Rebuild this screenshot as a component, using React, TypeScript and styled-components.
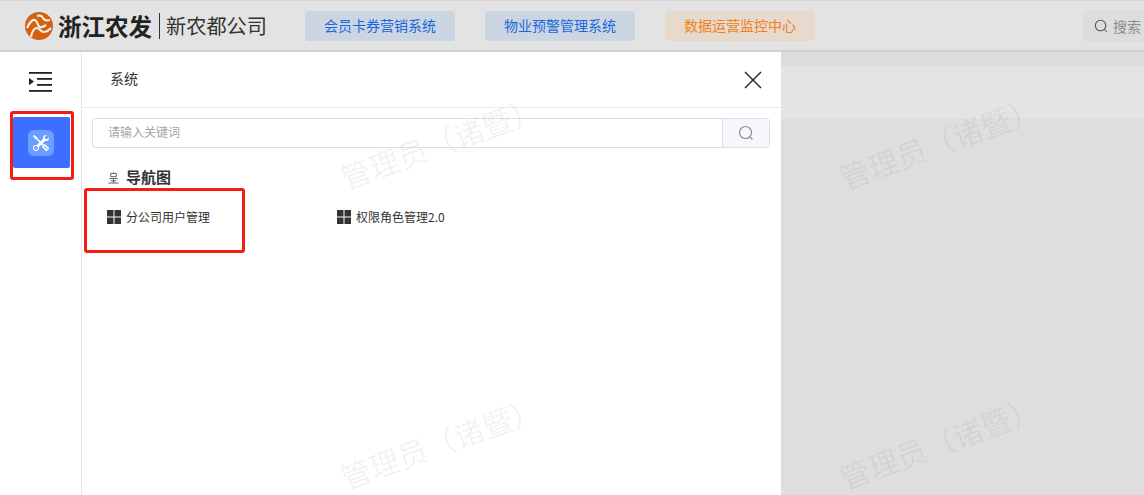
import styled, { createGlobalStyle } from "styled-components";
import { BsTools } from "react-icons/bs";

const Global = createGlobalStyle`
  html, body {
    margin: 0;
    padding: 0;
    background: #fff;
  }
  * { box-sizing: border-box; }
`;

const font = `"Noto Sans CJK SC", "Liberation Sans", sans-serif`;

const marks = [
  { x: 335, y: 126 },
  { x: 834, y: 126 },
  { x: 335, y: 426 },
  { x: 834, y: 426 },
];

const Logo = () => (
  <svg width="28" height="28" viewBox="0 0 28 28">
    <circle cx="14" cy="14" r="14" fill="#d4610f" />
    <path d="M2 16c3-6 5-9 8-8 3 1 2 6 5 7 2 .7 4-.5 6-2" fill="none" stroke="#f2f0ec" strokeWidth="2.2" />
    <path d="M6 25c1-5 3-9 6-9 3 0 3 4 7 4 3 0 5-2 7-4" fill="none" stroke="#f2f0ec" strokeWidth="2.2" />
    <path d="M12 4c3-1 5 0 6 2s3 3 7 2" fill="none" stroke="#f2f0ec" strokeWidth="2" />
  </svg>
);

const GridIcon = () => (
  <svg width="14" height="14" viewBox="0 0 14 14">
    <rect width="6.5" height="6.5" fill="#333" />
    <rect x="7.5" width="6.5" height="6.5" fill="#333" />
    <rect y="7.5" width="6.5" height="6.5" fill="#333" />
    <rect x="7.5" y="7.5" width="6.5" height="6.5" fill="#333" />
  </svg>
);

const SearchIcon = ({ size, color }: { size: number; color: string }) => (
  <svg width={size} height={size} viewBox="0 0 16 16" fill="none" stroke={color} strokeWidth="1.2">
    <circle cx="7.5" cy="7.5" r="6" />
    <path d="M12 12l2.5 2.5" />
  </svg>
);

export default function App() {
  return (
    <Page>
      <Global />
      <TopBar>
        <Brand>
          <Logo />
          <BrandName>浙江农发</BrandName>
          <BrandSub>新农都公司</BrandSub>
        </Brand>
        <Systems>
          <SystemLink>会员卡券营销系统</SystemLink>
          <SystemLink>物业预警管理系统</SystemLink>
          <SystemLink $warm>数据运营监控中心</SystemLink>
        </Systems>
        <TopSearch>
          <SearchIcon size={14} color="#555" />
          <span>搜索</span>
        </TopSearch>
      </TopBar>

      <Body>
        <Rail>
          <MenuToggle>
            <svg width="24" height="20" viewBox="0 0 24 20" fill="#222">
              <rect x="0" y="0" width="23" height="1.8" />
              <rect x="8" y="6" width="15" height="1.8" />
              <rect x="8" y="12" width="15" height="1.8" />
              <rect x="0" y="18" width="23" height="1.8" />
              <path d="M0 6l5 3.6-5 3.6z" />
            </svg>
          </MenuToggle>
          <RailTile>
            <RailIcon>
              <BsTools size={16} color="#fff" />
            </RailIcon>
          </RailTile>
        </Rail>

        <Panel>
          <PanelHead>
            <PanelTitle>系统</PanelTitle>
            <svg width="18" height="18" viewBox="0 0 18 18" stroke="#222" strokeWidth="1.4">
              <path d="M1 1l16 16M17 1L1 17" />
            </svg>
          </PanelHead>
          <SearchRow>
            <SearchInput>请输入关键词</SearchInput>
            <SearchButton>
              <SearchIcon size={16} color="#8c9096" />
            </SearchButton>
          </SearchRow>
          <Section>
            <SectionIcon viewBox="0 0 12 12" fill="none" stroke="#555" strokeWidth="1">
              <path d="M3 1h6v3.5H3zM6 0v1M1.5 6.5h9M3 9h6M0.5 11.5h11M6 6.5v5" />
            </SectionIcon>
            <SectionTitle>导航图</SectionTitle>
          </Section>
          <Links>
            <LinkItem>
              <GridIcon />
              <span>分公司用户管理</span>
            </LinkItem>
            <LinkItem>
              <GridIcon />
              <span>权限角色管理2.0</span>
            </LinkItem>
          </Links>
        </Panel>

        <Backdrop>
          <BackdropStrip />
          <BackdropBand />
          <BackdropRest />
        </Backdrop>
      </Body>

      {marks.map((m) => (
        <Watermark key={`${m.x}-${m.y}`} style={{ left: m.x, top: m.y }}>
          管理员（诸暨）
        </Watermark>
      ))}

      <RailHighlight />
      <LinkHighlight />
    </Page>
  );
}

const Page = styled.div`
  position: relative;
  width: 1144px;
  height: 495px;
  overflow: hidden;
  display: flex;
  flex-direction: column;
  font-family: ${font};
`;

const TopBar = styled.header`
  height: 52px;
  flex: none;
  display: flex;
  align-items: center;
  background: #e3e3e3;
  border-top: 1px solid #d8d8d8;
  border-bottom: 2px solid #cfcfcf;
  padding-left: 25px;
  overflow: hidden;
`;

const Brand = styled.div`
  display: flex;
  align-items: center;
  width: 280px;
  flex: none;
`;

const BrandName = styled.span`
  margin-left: 5px;
  font-size: 23.5px;
  line-height: 26px;
  font-weight: 700;
  color: #222;
  padding-right: 7px;
  border-right: 1px solid #333;
`;

const BrandSub = styled.span`
  margin-left: 6px;
  font-size: 20.2px;
  line-height: 28px;
  color: #333;
`;

const Systems = styled.nav`
  display: flex;
  gap: 30px;
  flex: none;
`;

const SystemLink = styled.a<{ $warm?: boolean }>`
  width: 150px;
  height: 30px;
  padding-bottom: 2px;
  display: flex;
  align-items: center;
  justify-content: center;
  border-radius: 3px;
  font-size: 14px;
  background: ${(p) => (p.$warm ? "#e7d9cc" : "#ccd6e2")};
  color: ${(p) => (p.$warm ? "#ee8122" : "#1a66dd")};
`;

const TopSearch = styled.div`
  margin-left: 268px;
  flex: none;
  width: 120px;
  height: 32px;
  display: flex;
  align-items: center;
  gap: 5px;
  padding-left: 11px;
  border-radius: 4px;
  background: #dcdedd;
  font-size: 14px;
  color: #8d8d8d;
`;

const Body = styled.main`
  flex: 1;
  display: flex;
  min-height: 0;
`;

const Rail = styled.aside`
  width: 82px;
  flex: none;
  background: #fff;
  border-right: 1px solid #e8e8ec;
  display: flex;
  flex-direction: column;
  align-items: flex-start;
`;

const MenuToggle = styled.div`
  height: 65px;
  width: 100%;
  display: flex;
  justify-content: center;
  padding: 20px 0 0 0;
`;

const RailTile = styled.div`
  margin-left: 13px;
  width: 57px;
  height: 51px;
  display: flex;
  align-items: center;
  justify-content: center;
  border-radius: 2px;
  background: #3d6fff;
`;

const RailIcon = styled.div`
  width: 26px;
  height: 26px;
  margin-left: -1px;
  border-radius: 6px;
  background: #6b9fff;
  display: flex;
  align-items: center;
  justify-content: center;
`;

const Panel = styled.section`
  width: 699px;
  flex: none;
  background: #fff;
  display: flex;
  flex-direction: column;
`;

const PanelHead = styled.div`
  height: 56px;
  flex: none;
  display: flex;
  align-items: center;
  justify-content: space-between;
  padding: 0 19px 0 28px;
  border-bottom: 1px solid #ebebef;
`;

const PanelTitle = styled.span`
  font-size: 14px;
  margin-bottom: 3px;
  color: #333;
`;

const SearchRow = styled.div`
  margin: 10px 11px 0 10px;
  height: 30px;
  flex: none;
  display: flex;
  border: 1px solid #dcdfe6;
  border-radius: 4px;
  overflow: hidden;
`;

const SearchInput = styled.div`
  flex: 1;
  display: flex;
  align-items: center;
  padding: 0 0 3px 15px;
  font-size: 12px;
  color: #a3a6ad;
`;

const SearchButton = styled.div`
  width: 47px;
  flex: none;
  display: flex;
  align-items: center;
  justify-content: center;
  background: #f5f7fa;
  border-left: 1px solid #dcdfe6;
`;

const Section = styled.div`
  margin: 19px 0 0 26px;
  display: flex;
  align-items: center;
  gap: 7px;
  height: 20px;
`;

const SectionIcon = styled.svg`
  width: 11px;
  height: 12px;
  flex: none;
  margin-top: 2px;
`;

const SectionTitle = styled.h3`
  margin: 0;
  font-size: 15px;
  line-height: 20px;
  font-weight: 700;
  color: #333;
`;

const Links = styled.div`
  margin: 23px 0 0 25px;
  display: flex;
`;

const LinkItem = styled.a`
  width: 230px;
  display: flex;
  align-items: center;
  gap: 5px;
  font-size: 12px;
  line-height: 14px;
  color: #333;
`;

const Backdrop = styled.div`
  flex: 1;
  display: flex;
  flex-direction: column;
  background: #dedede;
`;

const BackdropStrip = styled.div`
  height: 14px;
  background: #dcdcdc;
`;

const BackdropBand = styled.div`
  height: 52px;
  background: #e4e4e4;
`;

const BackdropRest = styled.div`
  flex: 1;
`;

const Watermark = styled.div`
  position: absolute;
  transform: rotate(-20deg);
  transform-origin: center;
  font-size: 30px;
  line-height: 32px;
  white-space: nowrap;
  color: rgba(60, 60, 60, 0.07);
  pointer-events: none;
`;

const RailHighlight = styled.div`
  position: absolute;
  left: 10px;
  top: 111px;
  width: 64px;
  height: 69px;
  border: 3px solid #f51c14;
  border-radius: 3px;
  pointer-events: none;
`;

const LinkHighlight = styled.div`
  position: absolute;
  left: 84px;
  top: 188px;
  width: 161px;
  height: 65px;
  border: 3px solid #f51c14;
  border-radius: 3px;
  pointer-events: none;
`;
